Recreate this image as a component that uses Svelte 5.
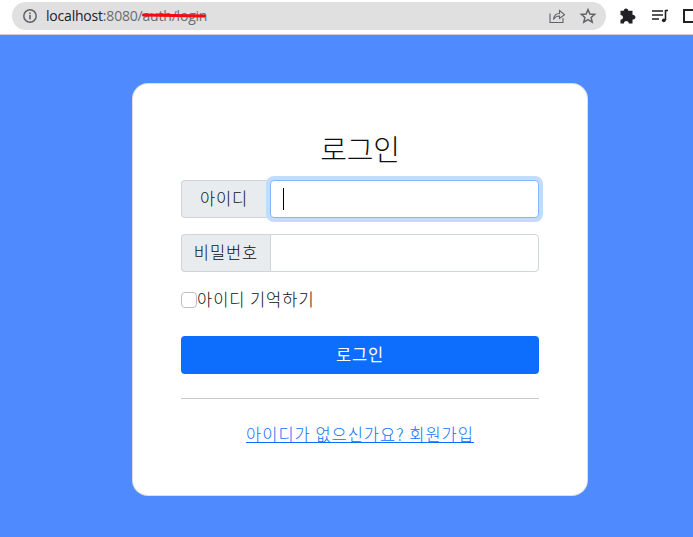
<script>
  let id = $state('');
  let pw = $state('');
</script>

<div class="page">
  <header class="chrome">
    <div class="omnibox">
      <svg class="info" width="16" height="16" viewBox="0 0 16 16"><circle cx="8" cy="8" r="6.2" fill="none" stroke="#5f6368" stroke-width="1.5"/><rect x="7.2" y="7" width="1.6" height="4.4" fill="#5f6368"/><rect x="7.2" y="4.5" width="1.6" height="1.6" fill="#5f6368"/></svg>
      <span class="url"><span class="host">localhost</span>:8080/<span class="path">auth/login<i class="strike"></i></span></span>
      <span class="grow"></span>
      <svg class="share" width="18" height="18" viewBox="0 0 18 18" fill="none" stroke="#5f6368" stroke-width="1.1"><path d="M2 6.5V15.5H15V11"/><path d="M5.5 12.5C6 8.5 8.5 6.5 11.5 6.5V3.5L16.5 7.7L11.5 11.5V9C9 9 7 10 5.5 12.5Z"/></svg>
      <svg class="star" width="18" height="18" viewBox="0 0 18 18" fill="none" stroke="#5f6368" stroke-width="1.5"><path d="M9 2.6L10.9 7L15.7 7.4L12.1 10.5L13.2 15.2L9 12.7L4.8 15.2L5.9 10.5L2.3 7.4L7.1 7Z"/></svg>
    </div>
    <div class="tools">
      <svg width="18" height="18" viewBox="0 0 18 18" fill="#202124"><path d="M7 1.5C8.4 1.5 9.4 2.5 9.4 3.8H13.5V7.7C15 7.7 16.5 8.6 16.5 10.2S15 12.6 13.5 12.6V16.5H9.8C9.8 15 8.8 13.9 7.3 13.9S4.9 15 4.9 16.5H1.5V12.7C3 12.7 4 11.8 4 10.3S3 7.9 1.5 7.9V3.8H4.7C4.7 2.5 5.6 1.5 7 1.5Z"/></svg>
      <svg width="18" height="18" viewBox="0 0 18 18" fill="none" stroke="#202124" stroke-width="1.6"><path d="M1 4H12M1 8H12M1 12H8"/><path d="M14.5 3V13.2" /><path d="M14.5 3.5H17"/><circle cx="12.8" cy="13.3" r="1.9" fill="#202124" stroke="none"/></svg>
      <span class="panel"></span>
    </div>
  </header>

  <main class="stage">
    <form class="card" onsubmit={(e) => e.preventDefault()}>
      <h1>로그인</h1>
      <div class="group focus">
        <span class="addon">아이디</span>
        <div class="field"><span class="caret"></span><input bind:value={id} aria-label="아이디" /></div>
      </div>
      <div class="group">
        <span class="addon">비밀번호</span>
        <div class="field"><input type="password" bind:value={pw} aria-label="비밀번호" /></div>
      </div>
      <label class="check"><span class="box"></span>아이디 기억하기</label>
      <button type="submit">로그인</button>
      <hr />
      <p class="signup"><a href="#signup">아이디가 없으신가요? 회원가입</a></p>
    </form>
  </main>
</div>

<style>
  :global(body) { margin: 0; }
  .page {
    width: 693px; height: 537px; overflow: hidden; background: #4f8bff;
    display: flex; flex-direction: column;
    font-family: "Noto Sans CJK KR", "Liberation Sans", sans-serif;
    font-weight: 300;
  }
  .chrome {
    background: #fff; border-bottom: 1px solid #cfd0d2;
    display: flex; align-items: center; flex: none;
    padding: 0 0 3px 12px;
    height: 31px;
  }
  .omnibox {
    width: 594px; height: 28px; border-radius: 14px; background: #e0e0e0;
    display: flex; align-items: center; padding: 0 10px; box-sizing: border-box; flex: none;
  }
  .url {
    margin-left: 8px; font: 400 14px "Open Sans", "Liberation Sans", sans-serif; color: #6a6c6f; letter-spacing: -0.2px; white-space: nowrap;
  }
  .host { color: #202124; }
  .path { position: relative; }
  .strike {
    position: absolute; left: -1px; right: 2px; top: 8px; height: 3px; border-radius: 2px; background: #f60a0f; transform: rotate(1deg);
  }
  .grow { flex: 1; }
  .share { margin-right: 13px; margin-left: -1px; }
  .star { margin-right: -1px; }
  .tools { display: flex; align-items: center; gap: 14px; margin-left: 13px; flex: none; }
  .panel { width: 16px; height: 14px; border: 2px solid #202124; border-right: 0; box-sizing: border-box; display: block; }
  .stage { flex: 1; display: flex; justify-content: center; padding: 48px 0 0 27px; }
  .card {
    width: 456px; height: 413px; box-sizing: border-box; background: #fff; flex: none;
    border: 1px solid rgba(0,0,0,.125); border-radius: 16px; padding: 45px 48px 0;
    display: flex; flex-direction: column; color: #0c0e10;
  }
  h1 {
    margin: 0 0 12px; height: 39px; line-height: 39px; font-size: 29px; font-weight: 300; text-align: center; letter-spacing: -0.2px;
  }
  .group { display: flex; height: 38px; margin-bottom: 16px; font-size: 16.5px; }
  .addon {
    width: 89px; box-sizing: border-box; background: #e9ecef; border: 1px solid #ced4da; border-right: 0; padding-bottom: 2px;
    border-radius: 4px 0 0 4px; display: flex; align-items: center; justify-content: center; letter-spacing: 0.9px; white-space: nowrap;
  }
  .group.focus .addon { padding-right: 4px; }
  .field {
    flex: 1; border: 1px solid #ced4da; border-radius: 0 4px 4px 0; background: #fff; position: relative; display: flex;
  }
  .group.focus .field {
    border-color: #86b7fe; box-shadow: 0 0 0 4px #c2dbfe; z-index: 1; border-radius: 4px;
  }
  .field input { flex: 1; width: 100%; border: 0; outline: 0; background: transparent; padding: 0 12px; font-size: 16px; }
  .caret { position: absolute; left: 12px; top: 7px; width: 1px; height: 22px; background: #000; }
  .check {
    display: flex; align-items: center; height: 22px; padding-bottom: 2px; margin-bottom: 24px; font-size: 16.5px; letter-spacing: 0.95px;
    white-space: nowrap;
  }
  .box { width: 16px; height: 16px; box-sizing: border-box; border: 1px solid #bfbfbf; border-radius: 4px; background: #fff; margin-top: 2px; }
  button {
    height: 38px; border: 0; border-radius: 4px; background: #0d6efd; color: #fff; font: inherit; font-size: 16.5px; font-weight: 400; letter-spacing: 0.9px; padding: 0 0 2px;
  }
  hr { width: 100%; margin: 24px 0 0; border: 0; border-top: 1px solid #c8c8c8; height: 0; }
  .signup { margin: 23px 0 0; text-align: center; font-size: 16.5px; line-height: 24px; letter-spacing: 0.98px; }
  a { color: #0d6efd; text-decoration: underline; }
</style>
